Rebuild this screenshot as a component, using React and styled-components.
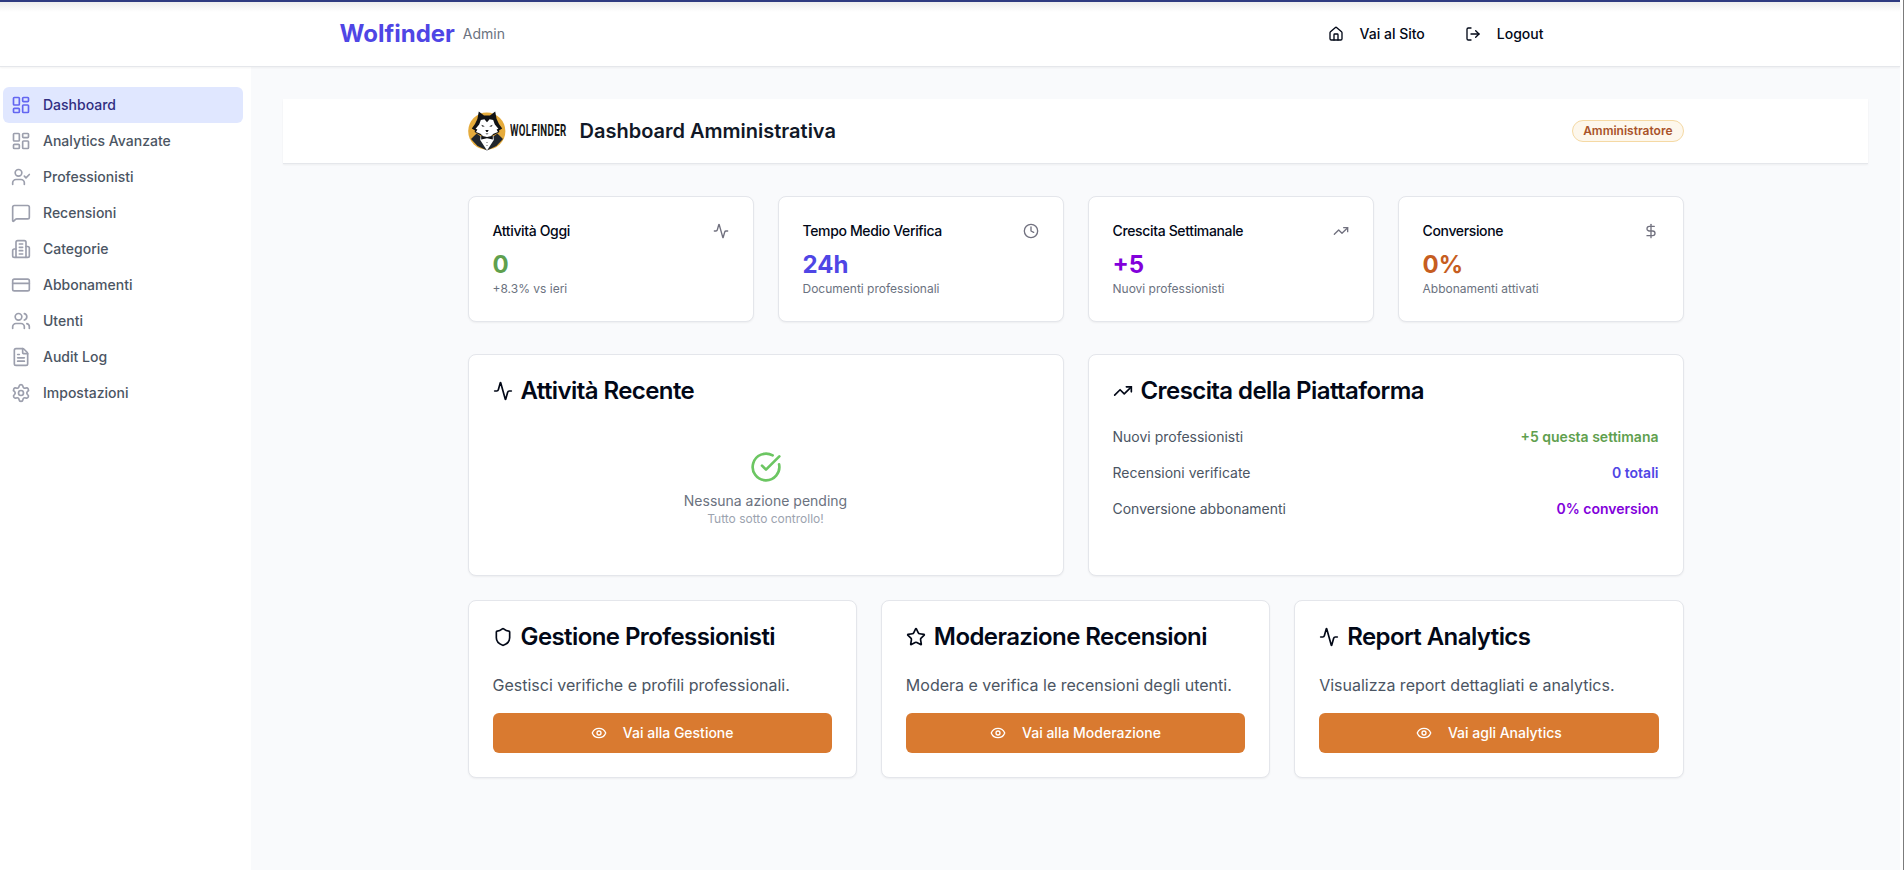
import React from "react";
import styled, { createGlobalStyle } from "styled-components";
import {
  LayoutDashboard, UserCheck, MessageSquare, CreditCard, Users, FileText, Settings,
  House, LogOut, Activity, Clock, TrendingUp, DollarSign, CircleCheckBig, Shield, Star, Eye,
} from "lucide-react";

const GlobalStyle = createGlobalStyle`
  *, *::before, *::after { box-sizing: border-box; }
  body {
    margin: 0;
    background: #fff;
    color: #020817;
    font-family: Inter, "Liberation Sans", sans-serif;
    font-size: 16px;
    line-height: 24px;
    overflow: hidden;
  }
  h1, h2, h3, p { margin: 0; }
  svg { flex-shrink: 0; display: block; }
`;

const Window = styled.div`
  height: 870px;
  padding-right: 3px;
  border-right: 1px solid #7b7b7b;
  display: flex;
  flex-direction: column;
`;

const TopStrip = styled.div`
  flex: none;
  height: 2px;
  background: #2e3a80;
`;

const Header = styled.header`
  flex: none;
  position: relative;
  height: 65px;
  padding-right: 5px;
  border-bottom: 1px solid #e5e7eb;
  background: linear-gradient(#ececec, #fff 10px);
  box-shadow: 0 1px 2px rgba(0, 0, 0, 0.05);
`;

const HeaderInner = styled.div`
  max-width: 1280px;
  height: 64px;
  margin: 0 auto;
  padding: 0 32px;
  display: flex;
  align-items: center;
  justify-content: space-between;
`;

const Brand = styled.div`
  display: flex;
  align-items: center;
  gap: 8px;
`;

const BrandName = styled.span`
  font-size: 24px;
  line-height: 32px;
  font-weight: 700;
  color: #4f46e5;
`;

const BrandRole = styled.span`
  font-size: 14px;
  line-height: 20px;
  color: #6b7280;
`;

const HeaderNav = styled.nav`
  display: flex;
  gap: 16px;
`;

const GhostButton = styled.button`
  height: 36px;
  padding: 0 12px;
  display: flex;
  align-items: center;
  gap: 16px;
  border: 0;
  background: none;
  color: #020817;
  font: 500 14px/20px Inter, sans-serif;
`;

const Body = styled.div`
  flex: 1;
  display: flex;
  min-height: 0;
`;

const Sidebar = styled.aside`
  flex: none;
  width: 251px;
  padding: 20px 8px 0 3px;
  background: #fff;
`;

const NavItem = styled.a`
  height: 36px;
  padding: 0 8px;
  display: flex;
  align-items: center;
  gap: 12px;
  border-radius: 6px;
  font-size: 14px;
  line-height: 20px;
  font-weight: 500;
  color: ${(p) => (p.$active ? "#312e81" : "#4b5563")};
  background: ${(p) => (p.$active ? "#e0e7ff" : "transparent")};
  svg { color: ${(p) => (p.$active ? "#6366f1" : "#9c9fad")}; }
`;

const Main = styled.main`
  flex: 1;
  padding: 32px;
  background: #f9fafc;
`;

const TitleBar = styled.div`
  height: 65px;
  background: #fff;
  border-bottom: 1px solid #e5e7eb;
  box-shadow: 0 1px 2px rgba(0, 0, 0, 0.05);
`;

const Container = styled.div`
  max-width: 1280px;
  margin: 0 auto;
  padding: 0 32px;
`;

const TitleRow = styled(Container)`
  height: 64px;
  display: flex;
  align-items: center;
  justify-content: space-between;
`;

const TitleGroup = styled.div`
  display: flex;
  align-items: center;
  gap: 12px;
`;

const Logo = styled.div`
  width: 100px;
  height: 40px;
  display: flex;
  align-items: center;
`;

const PageTitle = styled.h1`
  font-size: 20px;
  line-height: 28px;
  font-weight: 600;
  color: #111827;
`;

const Badge = styled.span`
  height: 22px;
  padding: 0 10px;
  display: flex;
  align-items: center;
  border: 1px solid #f5d9a4;
  border-radius: 11px;
  background: #fdf7ec;
  font-size: 12px;
  line-height: 16px;
  font-weight: 600;
  color: #a9532a;
`;

const Content = styled(Container)`
  padding-top: 32px;
`;

const Grid = styled.section`
  display: grid;
  grid-template-columns: repeat(${(p) => p.$columns}, 1fr);
  gap: 24px;
  margin-bottom: ${(p) => p.$after || 0}px;
`;

const Card = styled.article`
  padding: 24px;
  border: 1px solid #e4e6eb;
  border-radius: 8px;
  background: #fff;
  box-shadow: 0 1px 2px rgba(0, 0, 0, 0.05);
`;

const StatHeader = styled.div`
  display: flex;
  align-items: center;
  justify-content: space-between;
  margin-bottom: 8px;
  svg { color: #71717f; }
`;

const StatTitle = styled.h3`
  font-size: 14px;
  line-height: 20px;
  font-weight: 500;
  letter-spacing: -0.35px;
`;

const StatValue = styled.div`
  font-size: 24px;
  line-height: 32px;
  font-weight: 700;
  color: ${(p) => p.$color};
`;

const StatNote = styled.p`
  font-size: 12px;
  line-height: 16px;
  color: #6b7280;
`;

const CardTitle = styled.h2`
  display: flex;
  align-items: center;
  gap: 8px;
  margin-bottom: 24px;
  font-size: 24px;
  line-height: 24px;
  font-weight: 600;
  letter-spacing: -0.58px;
`;

const EmptyState = styled.div`
  padding: 24px 0;
  display: flex;
  flex-direction: column;
  align-items: center;
  svg { color: #6cc662; margin-bottom: 8px; }
`;

const EmptyTitle = styled.p`
  font-size: 14px;
  line-height: 20px;
  color: #6b7280;
`;

const EmptyNote = styled.p`
  font-size: 12px;
  line-height: 16px;
  color: #9ca3af;
`;

const GrowthList = styled.div`
  display: flex;
  flex-direction: column;
  gap: 16px;
`;

const GrowthRow = styled.div`
  display: flex;
  justify-content: space-between;
  font-size: 14px;
  line-height: 20px;
  color: #4b5563;
`;

const GrowthValue = styled.span`
  font-weight: 600;
  color: ${(p) => p.$color};
`;

const ActionText = styled.p`
  margin-bottom: 16px;
  color: #4b5563;
`;

const ActionButton = styled.button`
  width: 100%;
  height: 40px;
  display: flex;
  align-items: center;
  justify-content: center;
  gap: 16px;
  border: 0;
  border-radius: 6px;
  background: #d97a30;
  color: #fff;
  font: 500 14px/20px Inter, sans-serif;
`;

/* Outlined office building with two side wings. */
const BuildingIcon = ({ size }) => (
  <svg width={size} height={size} viewBox="0 0 24 24" fill="none" stroke="currentColor" strokeWidth="2" strokeLinecap="round" strokeLinejoin="round">
    <path d="M6 22V4a2 2 0 0 1 2-2h8a2 2 0 0 1 2 2v18Z" />
    <path d="M6 12H4a2 2 0 0 0-2 2v6a2 2 0 0 0 2 2h2" />
    <path d="M18 9h2a2 2 0 0 1 2 2v9a2 2 0 0 1-2 2h-2" />
    <path d="M10 6h4M10 10h4M10 14h4M10 18h4" />
  </svg>
);

const WolfMark = () => (
  <svg width="42" height="40" viewBox="0 0 42 40" aria-hidden="true">
    <circle cx="18.8" cy="20.1" r="18.6" fill="#e5ab3c" />
    <path d="M10.8 0.4 L16 4.4 H22 L27.2 0.4 L28.6 8 L31 13 L34.2 17.4 L31 19.6 L31.4 21 L27 23.6 L19 27 L11 23.6 L6.6 21 L7 19.6 L3.8 17.4 L7 13 L9.4 8 Z" fill="#111214" />
    <path d="M8.6 22.6 L3 28 L9.6 35 L19 39.6 L28.4 35 L35 28 L29.4 22.6 L19 30 Z" fill="#20262d" />
    <path d="M19 11.2 L21.6 8.2 L25.2 9 L26.8 13.6 L30.4 17.8 L28.6 18.6 L30 21 L25.5 22.8 L22 26 H16 L12.5 22.8 L8 21 L9.4 18.6 L7.6 17.8 L11.2 13.6 L12.8 9 L16.4 8.2 Z" fill="#fff" />
    <path d="M12.6 25 H25.4 L25.8 29 L19 39.4 L12.2 29 Z" fill="#fff" />
    <path d="M13.2 13.8 L16.8 15.2 L14.6 15.8 Z M24.8 13.8 L21.2 15.2 L23.4 15.8 Z" fill="#111214" />
    <path d="M17.3 19 H20.7 L19.6 21 H18.4 Z M17.4 22.6 H20.6 L19 23.4 Z" fill="#111214" />
    <path d="M13.2 24.8 L19 26 L24.8 24.8 V28.4 L19 27.2 L13.2 28.4 Z" fill="#111214" />
    <circle cx="19" cy="31.5" r="0.5" fill="#333" />
    <circle cx="19" cy="34.5" r="0.5" fill="#333" />
  </svg>
);

/* Narrow wordmark: regular-width letters squeezed horizontally to 57px. */
const Wordmark = styled.span`
  width: 57px;
  font: 700 16px/20px Roboto, sans-serif;
  letter-spacing: 0.6px;
  color: #161616;
  white-space: nowrap;
  transform: scaleX(0.605);
  transform-origin: left center;
`;

const navItems = [
  { label: "Dashboard", icon: LayoutDashboard, active: true },
  { label: "Analytics Avanzate", icon: LayoutDashboard },
  { label: "Professionisti", icon: UserCheck },
  { label: "Recensioni", icon: MessageSquare },
  { label: "Categorie", icon: BuildingIcon },
  { label: "Abbonamenti", icon: CreditCard },
  { label: "Utenti", icon: Users },
  { label: "Audit Log", icon: FileText },
  { label: "Impostazioni", icon: Settings },
];

const stats = [
  { title: "Attività Oggi", value: "0", note: "+8.3% vs ieri", color: "#5fa04e", icon: Activity },
  { title: "Tempo Medio Verifica", value: "24h", note: "Documenti professionali", color: "#4f46e5", icon: Clock },
  { title: "Crescita Settimanale", value: "+5", note: "Nuovi professionisti", color: "#8200db", icon: TrendingUp },
  { title: "Conversione", value: "0%", note: "Abbonamenti attivati", color: "#c65d21", icon: DollarSign },
];

const growth = [
  { label: "Nuovi professionisti", value: "+5 questa settimana", color: "#5fa04e" },
  { label: "Recensioni verificate", value: "0 totali", color: "#4f46e5" },
  { label: "Conversione abbonamenti", value: "0% conversion", color: "#8200db" },
];

const actions = [
  { title: "Gestione Professionisti", text: "Gestisci verifiche e profili professionali.", button: "Vai alla Gestione", icon: Shield },
  { title: "Moderazione Recensioni", text: "Modera e verifica le recensioni degli utenti.", button: "Vai alla Moderazione", icon: Star },
  { title: "Report Analytics", text: "Visualizza report dettagliati e analytics.", button: "Vai agli Analytics", icon: Activity },
];

export default function App() {
  return (
    <Window>
      <GlobalStyle />
      <TopStrip />
      <Header>
        <HeaderInner>
          <Brand>
            <BrandName>Wolfinder</BrandName>
            <BrandRole>Admin</BrandRole>
          </Brand>
          <HeaderNav>
            <GhostButton><House size={16} />Vai al Sito</GhostButton>
            <GhostButton><LogOut size={16} />Logout</GhostButton>
          </HeaderNav>
        </HeaderInner>
      </Header>
      <Body>
        <Sidebar>
          {navItems.map(({ label, icon: Icon, active }) => (
            <NavItem key={label} $active={active}><Icon size={20} />{label}</NavItem>
          ))}
        </Sidebar>
        <Main>
          <TitleBar>
            <TitleRow>
              <TitleGroup>
                <Logo><WolfMark /><Wordmark>WOLFINDER</Wordmark></Logo>
                <PageTitle>Dashboard Amministrativa</PageTitle>
              </TitleGroup>
              <Badge>Amministratore</Badge>
            </TitleRow>
          </TitleBar>
          <Content>
            <Grid $columns={4} $after={32}>
              {stats.map(({ title, value, note, color, icon: Icon }) => (
                <Card key={title}>
                  <StatHeader><StatTitle>{title}</StatTitle><Icon size={16} /></StatHeader>
                  <StatValue $color={color}>{value}</StatValue>
                  <StatNote>{note}</StatNote>
                </Card>
              ))}
            </Grid>
            <Grid $columns={2} $after={24}>
              <Card>
                <CardTitle><Activity size={20} />Attività Recente</CardTitle>
                <EmptyState>
                  <CircleCheckBig size={32} />
                  <EmptyTitle>Nessuna azione pending</EmptyTitle>
                  <EmptyNote>Tutto sotto controllo!</EmptyNote>
                </EmptyState>
              </Card>
              <Card>
                <CardTitle><TrendingUp size={20} />Crescita della Piattaforma</CardTitle>
                <GrowthList>
                  {growth.map(({ label, value, color }) => (
                    <GrowthRow key={label}>{label}<GrowthValue $color={color}>{value}</GrowthValue></GrowthRow>
                  ))}
                </GrowthList>
              </Card>
            </Grid>
            <Grid $columns={3}>
              {actions.map(({ title, text, button, icon: Icon }) => (
                <Card key={title}>
                  <CardTitle><Icon size={20} />{title}</CardTitle>
                  <ActionText>{text}</ActionText>
                  <ActionButton><Eye size={16} />{button}</ActionButton>
                </Card>
              ))}
            </Grid>
          </Content>
        </Main>
      </Body>
    </Window>
  );
}
